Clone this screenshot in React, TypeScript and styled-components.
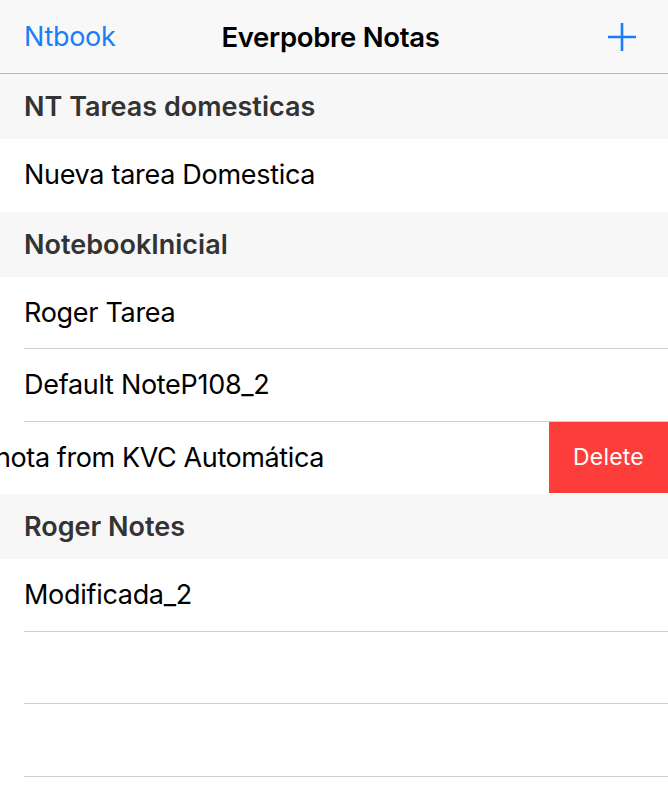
import React, { FC } from 'react';
import styled, { createGlobalStyle } from 'styled-components';

const GlobalStyle = createGlobalStyle`
    body {
        margin: 0;
        background: #ffffff;
        font-family: Inter, "Noto Sans", sans-serif;
        -webkit-font-smoothing: antialiased;
    }
`

const Page = styled.div`
    width: 668px;
    min-height: 800px;
    overflow: hidden;
    background: #ffffff;
`

const NavBar = styled.div`
    height: 73px;
    display: grid;
    grid-template-columns: 1fr auto 1fr;
    align-items: center;
    padding: 0 31px 0 24px;
    background: #f8f8f8;
    border-bottom: 1px solid #b9b9bc;
`

const NavButton = styled.span`
    font-size: 27px;
    color: #1a7ef6;
    letter-spacing: -0.3px;
`

const NavTitle = styled.span`
    font-size: 27.5px;
    font-weight: 600;
    color: #000000;
    letter-spacing: -0.3px;
`

const AddButton = styled.span`
    justify-self: end;
    display: flex;
    align-items: center;
`

const SectionHeader = styled.div`
    height: 65px;
    display: flex;
    align-items: center;
    padding-left: 24px;
    background: #f7f7f7;
    font-size: 27px;
    font-weight: 600;
    color: #333333;
    letter-spacing: 0px;
`

const Row = styled.div`
    display: flex;
    padding-left: 24px;
    background: #ffffff;
`

const RowInner = styled.div<{ $last?: boolean }>`
    flex: 1;
    height: 71.5px;
    display: flex;
    align-items: center;
    border-bottom: 1px solid ${p => (p.$last ? 'transparent' : '#cfcfd2')};
    font-size: 27px;
    color: #000000;
    letter-spacing: -0.3px;
    white-space: nowrap;
`

const SwipedRow = styled.div`
    display: flex;
    height: 71.5px;
    border-bottom: 1px solid transparent;
    background: #ffffff;
`

const SwipedText = styled.div`
    flex: 1;
    display: flex;
    align-items: center;
    overflow: hidden;
    font-size: 27px;
    color: #000000;
    letter-spacing: -0.4px;
    white-space: nowrap;
    text-indent: -5px;
`

const DeleteButton = styled.div`
    width: 119px;
    display: flex;
    align-items: center;
    justify-content: center;
    background: #fc3d39;
    color: #ffffff;
    font-size: 23px;
    letter-spacing: 0.2px;
`

type Section = { title: string; notes: string[] };

const sections: Section[] = [
    { title: 'NT Tareas domesticas', notes: ['Nueva tarea Domestica'] },
    { title: 'NotebookInicial', notes: ['Roger Tarea', 'Default NoteP108_2'] },
];

const App: FC = () => {
    return (
        <Page>
            <GlobalStyle />
            <NavBar>
                <NavButton>Ntbook</NavButton>
                <NavTitle>Everpobre Notas</NavTitle>
                <AddButton>
                    <svg width="30" height="30" viewBox="0 0 30 30">
                        <path d="M15 1v28M1 15h28" stroke="#1a7ef6" strokeWidth="2.6" fill="none" />
                    </svg>
                </AddButton>
            </NavBar>

            {sections.map((s, i) => (
                <React.Fragment key={s.title}>
                    <SectionHeader>{s.title}</SectionHeader>
                    {s.notes.map((n, j) => (
                        <Row key={n}>
                            <RowInner $last={i === 0 && j === s.notes.length - 1}>{n}</RowInner>
                        </Row>
                    ))}
                </React.Fragment>
            ))}
            <SwipedRow>
                <SwipedText>nota from KVC Automática</SwipedText>
                <DeleteButton>Delete</DeleteButton>
            </SwipedRow>

            <SectionHeader>Roger Notes</SectionHeader>
            <Row>
                <RowInner>Modificada_2</RowInner>
            </Row>
            <Row>
                <RowInner />
            </Row>
            <Row>
                <RowInner />
            </Row>
        </Page>
    );
}

export default App;
